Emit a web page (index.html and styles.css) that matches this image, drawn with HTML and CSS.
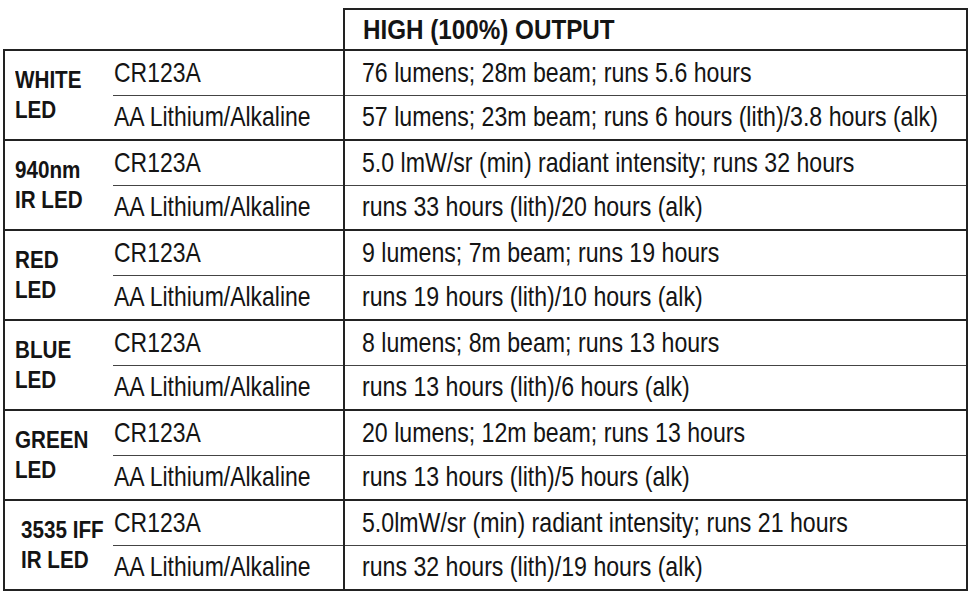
FILE: index.html
```html
<!DOCTYPE html>
<html lang="en">
<head>
<meta charset="utf-8">
<title>High output runtime table</title>
<link rel="stylesheet" href="styles.css">
</head>
<body>
<table class="spec">
  <colgroup>
    <col class="c-label">
    <col class="c-batt">
    <col class="c-data">
  </colgroup>
  <thead>
    <tr class="head-row">
      <th class="blank" colspan="2"></th>
      <th class="head"><span class="nar">HIGH (100%) OUTPUT</span></th>
    </tr>
  </thead>
  <tbody class="group">
    <tr class="first">
      <td class="label" rowspan="2"><span class="nar">WHITE<br>LED</span></td>
      <td class="batt"><span class="nar">CR123A</span></td>
      <td class="data"><span class="nar">76 lumens; 28m beam; runs 5.6 hours</span></td>
    </tr>
    <tr class="second">
      <td class="batt"><span class="nar">AA Lithium/Alkaline</span></td>
      <td class="data"><span class="nar">57 lumens; 23m beam; runs 6 hours (lith)/3.8 hours (alk)</span></td>
    </tr>
  </tbody>
  <tbody class="group">
    <tr class="first">
      <td class="label" rowspan="2"><span class="nar">940nm<br>IR LED</span></td>
      <td class="batt"><span class="nar">CR123A</span></td>
      <td class="data"><span class="nar">5.0 lmW/sr (min) radiant intensity; runs 32 hours</span></td>
    </tr>
    <tr class="second">
      <td class="batt"><span class="nar">AA Lithium/Alkaline</span></td>
      <td class="data"><span class="nar">runs 33 hours (lith)/20 hours (alk)</span></td>
    </tr>
  </tbody>
  <tbody class="group">
    <tr class="first">
      <td class="label" rowspan="2"><span class="nar">RED<br>LED</span></td>
      <td class="batt"><span class="nar">CR123A</span></td>
      <td class="data"><span class="nar">9 lumens; 7m beam; runs 19 hours</span></td>
    </tr>
    <tr class="second">
      <td class="batt"><span class="nar">AA Lithium/Alkaline</span></td>
      <td class="data"><span class="nar">runs 19 hours (lith)/10 hours (alk)</span></td>
    </tr>
  </tbody>
  <tbody class="group">
    <tr class="first">
      <td class="label" rowspan="2"><span class="nar">BLUE<br>LED</span></td>
      <td class="batt"><span class="nar">CR123A</span></td>
      <td class="data"><span class="nar">8 lumens; 8m beam; runs 13 hours</span></td>
    </tr>
    <tr class="second">
      <td class="batt"><span class="nar">AA Lithium/Alkaline</span></td>
      <td class="data"><span class="nar">runs 13 hours (lith)/6 hours (alk)</span></td>
    </tr>
  </tbody>
  <tbody class="group">
    <tr class="first">
      <td class="label" rowspan="2"><span class="nar">GREEN<br>LED</span></td>
      <td class="batt"><span class="nar">CR123A</span></td>
      <td class="data"><span class="nar">20 lumens; 12m beam; runs 13 hours</span></td>
    </tr>
    <tr class="second">
      <td class="batt"><span class="nar">AA Lithium/Alkaline</span></td>
      <td class="data"><span class="nar">runs 13 hours (lith)/5 hours (alk)</span></td>
    </tr>
  </tbody>
  <tbody class="group last">
    <tr class="first">
      <td class="label label-indent" rowspan="2"><span class="nar">3535 IFF<br>IR LED</span></td>
      <td class="batt"><span class="nar">CR123A</span></td>
      <td class="data"><span class="nar">5.0lmW/sr (min) radiant intensity; runs 21 hours</span></td>
    </tr>
    <tr class="second">
      <td class="batt"><span class="nar">AA Lithium/Alkaline</span></td>
      <td class="data"><span class="nar">runs 32 hours (lith)/19 hours (alk)</span></td>
    </tr>
  </tbody>
</table>
</body>
</html>
```

FILE: styles.css
```css
html, body {
  margin: 0;
  padding: 0;
  background: #ffffff;
}

body {
  padding: 8px 0 0 3px;
  font-family: "Liberation Sans", Arial, sans-serif;
  color: #141414;
}

.spec {
  border-collapse: collapse;
  table-layout: fixed;
  width: 963px;
}

.c-label { width: 109px; }
.c-batt { width: 231px; }
.c-data { width: 623px; }

.spec th,
.spec td {
  padding: 0;
  vertical-align: middle;
  text-align: left;
  white-space: nowrap;
  overflow: hidden;
}

/* Arial-Narrow-like glyph widths from Liberation Sans */
.nar {
  display: inline-block;
  transform: scaleX(0.82);
  transform-origin: 0 50%;
}

.head-row {
  height: 41px;
}

.spec .head {
  border: 2px solid #222;
  font-weight: bold;
  font-size: 28px;
  padding: 0 0 0 18px;
}

.spec .head .nar {
  transform: scaleX(0.865);
}

.spec .blank {
  border: none;
}

.group tr {
  height: 45px;
}

.group .first td {
  border-top: 2px solid #222;
}

.group .second td {
  border-top: 1px solid #444;
}

.spec .label {
  border-left: 2px solid #222;
  border-bottom: 2px solid #222;
  font-weight: bold;
  font-size: 24px;
  line-height: 30px;
  padding-left: 10px;
}

.spec .label .nar {
  transform: scaleX(0.86);
}

.spec .label-indent {
  padding-left: 16px;
}

.spec .batt {
  font-size: 28px;
  padding-left: 1px;
}

.spec .data {
  border-left: 2px solid #222;
  border-right: 2px solid #222;
  font-size: 28px;
  padding-left: 17px;
}

.spec .data .nar {
  transform: scaleX(0.826);
}

.group.last .second td {
  border-bottom: 2px solid #222;
}
```
